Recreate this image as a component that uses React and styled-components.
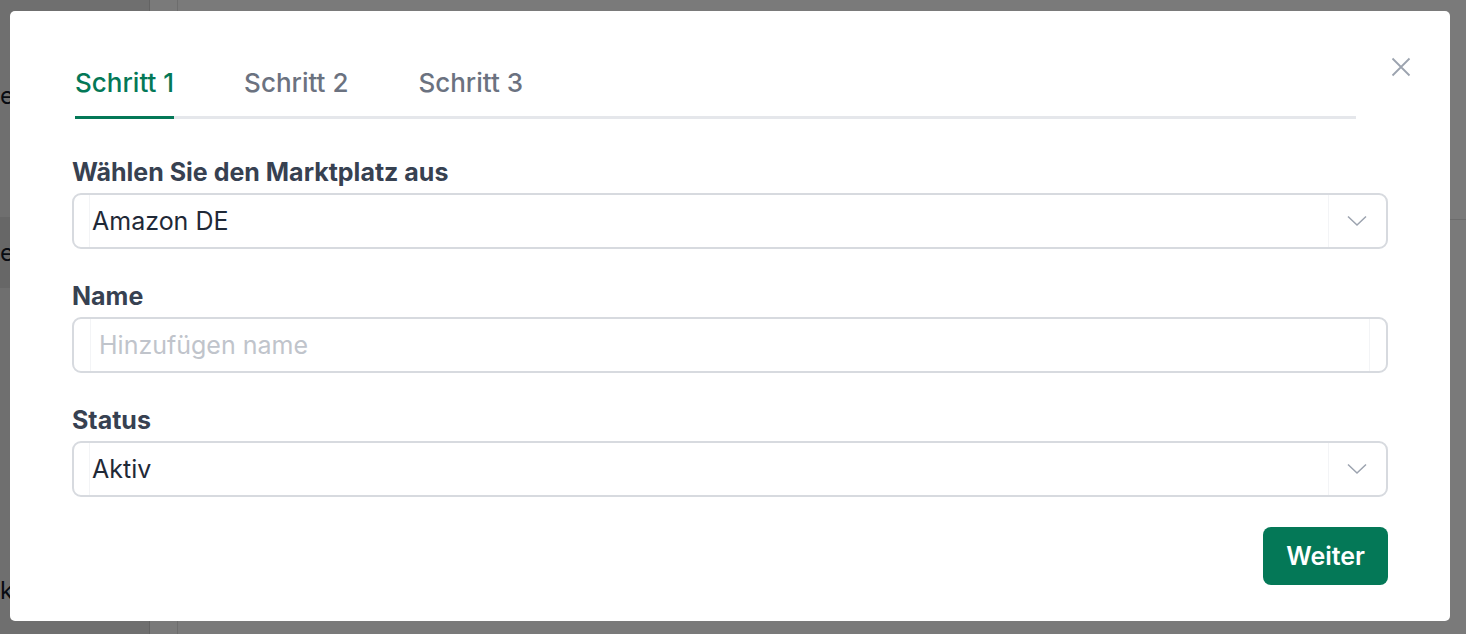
import React, { useState } from 'react'
import styled, { createGlobalStyle } from 'styled-components'

const GlobalStyle = createGlobalStyle`
  * { box-sizing: border-box; }
  html, body { margin: 0; padding: 0; }
  body {
    font-family: Inter, "Noto Sans", sans-serif;
    background: #7b7b7b;
    -webkit-font-smoothing: antialiased;
  }
`

/* ---------- page underneath the overlay ---------- */
const Page = styled.div`
  display: flex;
  height: 634px;
  overflow: hidden;
  background: #ffffff;
`

const Sidebar = styled.aside`
  width: 150px;
  flex-shrink: 0;
  background: #e8e8e8;
  border-right: 1px solid #d0d0d0;
  display: flex;
  flex-direction: column;
  padding-top: 60px;
`

const SideItem = styled.div`
  height: 71px;
  display: flex;
  align-items: center;
  font-size: 24px;
  color: #111827;
  background: ${p => (p.active ? '#d8d8d8' : 'transparent')};
  margin-top: ${p => p.gap || 0}px;
`

const Rail = styled.div`
  width: 28px;
  flex-shrink: 0;
  border-right: 1px solid #e4e4e4;
`

const Main = styled.main`
  flex: 1;
  display: flex;
  flex-direction: column;
`

const MainHead = styled.div`
  height: 220px;
  border-bottom: 1px solid #e2e2e2;
`

/* ---------- overlay + modal ---------- */
const Overlay = styled.div`
  position: fixed;
  inset: 0;
  background: rgba(0, 0, 0, 0.52);
  display: flex;
  align-items: flex-start;
  justify-content: flex-start;
  padding: 11px 0 0 10px;
`

const Modal = styled.div`
  position: relative;
  width: 1440px;
  height: 610px;
  background: #ffffff;
  border-radius: 5px;
  padding: 56px 62px 0 62px;
  display: flex;
  flex-direction: column;
`

const CloseButton = styled.button`
  position: absolute;
  top: 43px;
  right: 36px;
  width: 26px;
  height: 26px;
  padding: 0;
  border: 0;
  background: transparent;
  cursor: pointer;
  display: flex;
  align-items: center;
  justify-content: center;
  color: #9ca3af;
`

const Tabs = styled.div`
  display: flex;
  gap: 70px;
  margin: 0 32px 0 3px;
  border-bottom: 3px solid #e5e7eb;
`

const Tab = styled.button`
  border: 0;
  background: transparent;
  padding: 0 0 17px 0;
  margin-bottom: -3px;
  font-family: inherit;
  font-size: 26px;
  line-height: 32px;
  font-weight: 500;
  cursor: pointer;
  color: ${p => (p.active ? '#047857' : '#6b7280')};
  border-bottom: 3px solid ${p => (p.active ? '#047857' : 'transparent')};
`

const Form = styled.div`
  display: flex;
  flex-direction: column;
  margin-top: 38px;
`

const Field = styled.div`
  display: flex;
  flex-direction: column;
  gap: 6px;
  margin-bottom: 32px;
`

const Label = styled.label`
  font-size: 25px;
  line-height: 30px;
  font-weight: 700;
  color: #374151;
`

const Box = styled.div`
  height: 56px;
  border: 2px solid #d7dadf;
  border-radius: 9px;
  display: flex;
  align-items: stretch;
  overflow: hidden;
`

const Value = styled.div`
  flex: 1;
  display: flex;
  align-items: center;
  border-left: 1px solid #f3f4f6;
  margin-left: 15px;
  padding-left: 2px;
  font-size: 25px;
  color: #1f2937;
`

const TextInput = styled.input`
  flex: 1;
  border: 0;
  outline: none;
  border-left: 1px solid #f3f4f6;
  border-right: 1px solid #f3f4f6;
  margin: 0 16px;
  padding: 0 8px;
  font-family: inherit;
  font-size: 25px;
  color: #1f2937;
  background: transparent;
  &::placeholder { color: #c0c4cb; }
`

const Chevron = styled.div`
  width: 58px;
  padding-right: 2px;
  border-left: 1px solid #f3f4f6;
  display: flex;
  align-items: center;
  justify-content: center;
  color: #9ca3af;
`

const Footer = styled.div`
  display: flex;
  justify-content: flex-end;
  margin-top: -2px;
`

const PrimaryButton = styled.button`
  height: 58px;
  padding: 0 23px;
  border: 0;
  border-radius: 8px;
  background: #047857;
  color: #ffffff;
  font-family: inherit;
  font-size: 25px;
  font-weight: 600;
  cursor: pointer;
`

const ChevronIcon = () => (
  <svg width="20" height="12" viewBox="0 0 20 12" fill="none" stroke="currentColor" strokeWidth="1.5">
    <path d="M1 1.5 L10 10 L19 1.5" />
  </svg>
)

const CloseIcon = () => (
  <svg width="20" height="20" viewBox="0 0 20 20" fill="none" stroke="currentColor" strokeWidth="1.8">
    <path d="M1.5 1.5 L18.5 18.5 M18.5 1.5 L1.5 18.5" />
  </svg>
)

const Select = ({ value }) => (
  <Box>
    <Value>{value}</Value>
    <Chevron><ChevronIcon /></Chevron>
  </Box>
)

export default function App() {
  const [step, setStep] = useState(1)

  return (
    <>
      <GlobalStyle />
      <Page>
        <Sidebar>
          <SideItem>e</SideItem>
          <SideItem gap={86} active>e</SideItem>
          <SideItem gap={267}>k</SideItem>
        </Sidebar>
        <Rail />
        <Main>
          <MainHead />
        </Main>
      </Page>

      <Overlay>
        <Modal>
          <CloseButton aria-label="close"><CloseIcon /></CloseButton>
          <Tabs>
            {[1, 2, 3].map(n => (
              <Tab key={n} active={step === n} onClick={() => setStep(n)}>
                Schritt {n}
              </Tab>
            ))}
          </Tabs>

          <Form>
            <Field>
              <Label>Wählen Sie den Marktplatz aus</Label>
              <Select value="Amazon DE" />
            </Field>
            <Field>
              <Label>Name</Label>
              <Box>
                <TextInput placeholder="Hinzufügen name" />
              </Box>
            </Field>
            <Field>
              <Label>Status</Label>
              <Select value="Aktiv" />
            </Field>
            <Footer>
              <PrimaryButton>Weiter</PrimaryButton>
            </Footer>
          </Form>
        </Modal>
      </Overlay>
    </>
  )
}
